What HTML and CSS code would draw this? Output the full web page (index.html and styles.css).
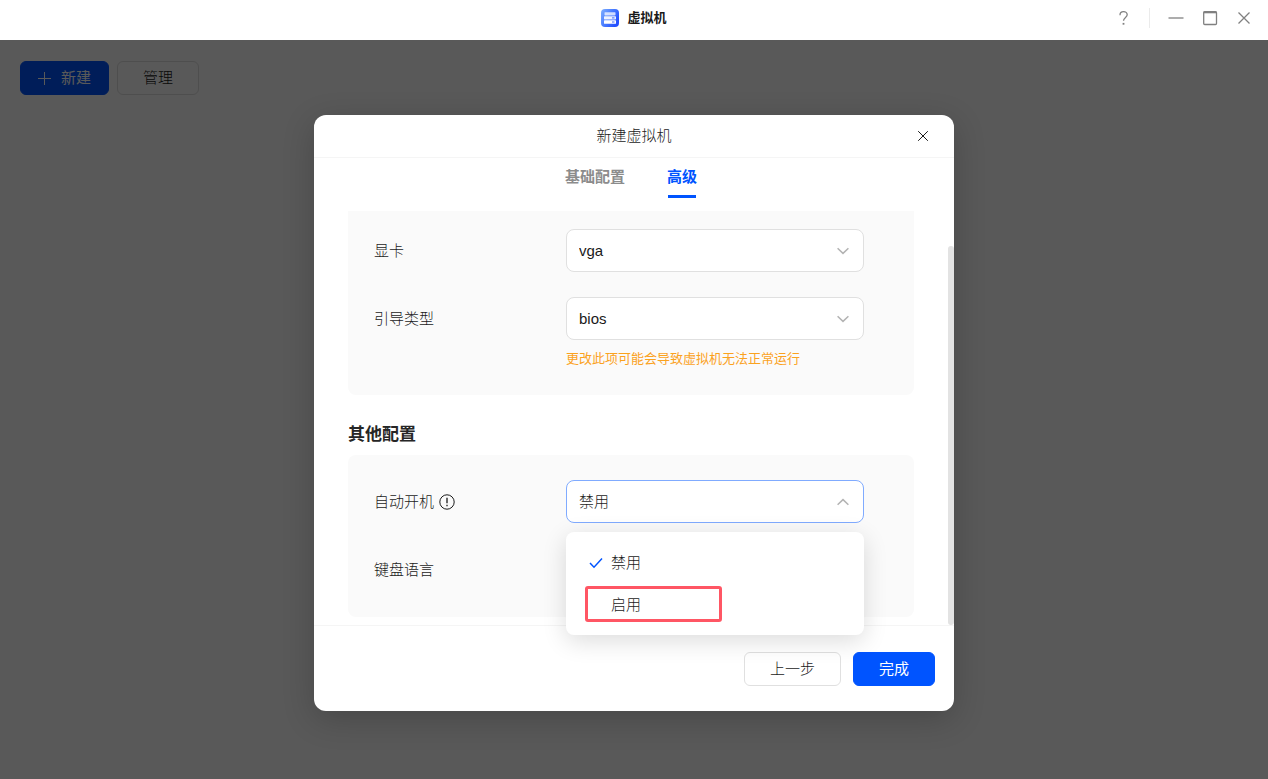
FILE: index.html
```
<!DOCTYPE html>
<html lang="zh-CN">
<head>
  <meta charset="UTF-8" />
  <meta name="viewport" content="width=device-width, initial-scale=1" />
  <title>虚拟机</title>
  <link rel="stylesheet" href="styles.css">
</head>

<body>
  <!-- ==== window title bar ==== -->
  <header class="titlebar">
    <div class="app-title">
      <svg width="18" height="18" viewBox="0 0 18 18" aria-hidden="true">
        <defs>
          <linearGradient id="logo" x1="0" y1="0" x2="1" y2="0.6">
            <stop offset="0" stop-color="#7fb0ff" />
            <stop offset="0.5" stop-color="#4a7dff" />
            <stop offset="1" stop-color="#2450ff" />
          </linearGradient>
        </defs>
        <rect width="18" height="18" rx="4" fill="url(#logo)" />
        <rect x="3.5" y="3.2" width="11" height="3.2" rx="0.6" fill="#fff" fill-opacity="0.75" />
        <rect x="3" y="7.2" width="12" height="3.2" rx="0.6" fill="#fff" fill-opacity="0.9" />
        <rect x="3" y="11.2" width="12" height="3.6" rx="0.6" fill="#fff" />
        <path d="M11 8.9h2.5M11 13h2.5" stroke="#3f6bff" stroke-width="1" />
      </svg>
      <h1>虚拟机</h1>
    </div>

    <div class="window-controls">
      <button class="icon-btn help" aria-label="帮助">
        <svg width="16" height="16" viewBox="0 0 16 16">
          <path d="M4 5.2C4 2.9 5.4 1.7 7.5 1.7s3.7 1.3 3.7 3.1c0 2.6-3.7 2.8-3.7 6" />
          <path d="M7.5 12.9v1.8" stroke-width="1.8" />
        </svg>
      </button>
      <button class="icon-btn" aria-label="最小化">
        <svg width="16" height="16" viewBox="0 0 16 16"><path d="M0.5 8h15" /></svg>
      </button>
      <button class="icon-btn" aria-label="最大化">
        <svg width="16" height="16" viewBox="0 0 16 16">
          <rect x="1.7" y="1.7" width="12.8" height="12.8" rx="1" />
          <path d="M1.5 2.4h13" stroke-width="1.8" />
        </svg>
      </button>
      <button class="icon-btn" aria-label="关闭">
        <svg width="16" height="16" viewBox="0 0 16 16"><path d="M2.5 2.5l11 11M13.5 2.5l-11 11" /></svg>
      </button>
    </div>
  </header>

  <div class="workspace">
    <div class="toolbar">
      <button class="btn btn-primary">
        <svg width="13" height="13" viewBox="0 0 13 13" aria-hidden="true"><path d="M6.5 0v13M0 6.5h13" /></svg>
        新建
      </button>
      <button class="btn">管理</button>
    </div>

    <!-- ==== create VM dialog ==== -->
    <div class="overlay">
      <section class="dialog" role="dialog" aria-modal="true" aria-labelledby="dialog-title">
        <header class="dialog-header">
          <h2 id="dialog-title">新建虚拟机</h2>
          <button class="icon-btn dialog-close" aria-label="关闭">
            <svg width="12" height="12" viewBox="0 0 12 12"><path d="M1.2 1.2l9.6 9.6M10.8 1.2l-9.6 9.6" /></svg>
          </button>
        </header>

        <div class="tabs" role="tablist">
          <button class="tab" role="tab" aria-selected="false">基础配置</button>
          <button class="tab active" role="tab" aria-selected="true">高级</button>
        </div>

        <div class="dialog-body">
          <div class="card card-scrolled">
            <div class="field">
              <label for="gpu">显卡</label>
              <div class="select">
                <select id="gpu"><option>vga</option></select>
                <svg width="12" height="8" viewBox="0 0 12 8"><path d="M0.6 1.2L6 6.4l5.4-5.2" /></svg>
              </div>
            </div>
            <div class="field">
              <label for="boot">引导类型</label>
              <div class="select">
                <select id="boot"><option>bios</option></select>
                <svg width="12" height="8" viewBox="0 0 12 8"><path d="M0.6 1.2L6 6.4l5.4-5.2" /></svg>
              </div>
              <p class="hint">更改此项可能会导致虚拟机无法正常运行</p>
            </div>
          </div>

          <h3>其他配置</h3>

          <div class="card">
            <div class="field">
              <label for="autostart">自动开机
                <svg width="16" height="16" viewBox="0 0 16 16" aria-hidden="true">
                  <circle cx="8" cy="8" r="7.2" />
                  <path d="M8 3.8v5.4M8 10.8v1.4" stroke-width="1.3" />
                </svg>
              </label>
              <div class="select open">
                <select id="autostart"><option>禁用</option><option>启用</option></select>
                <svg width="12" height="8" viewBox="0 0 12 8"><path d="M0.6 6.8L6 1.6l5.4 5.2" /></svg>
                <div class="menu" role="listbox" aria-label="自动开机">
                  <button class="option" role="option" aria-selected="true">
                    <svg width="14" height="12" viewBox="0 0 14 12" aria-hidden="true"><path d="M1 6l4 4.2L13 1.6" /></svg>
                    禁用
                  </button>
                  <button class="option" role="option" aria-selected="false">启用</button>
                  <span class="marker"></span>
                </div>
              </div>
            </div>
            <div class="field">
              <label for="keyboard">键盘语言</label>
              <div class="select">
                <select id="keyboard"></select>
              </div>
            </div>
          </div>

          <span class="scroll-thumb"></span>
        </div>

        <footer class="dialog-footer">
          <button class="btn">上一步</button>
          <button class="btn btn-primary">完成</button>
        </footer>
      </section>
    </div>
  </div>
</body>
</html>
```
FILE: styles.css
```
:root{
  --blue:#0054ff;
  --text:#1a1a1a;
  --muted:#8c8c8c;
  --line:#e0e0e0;
  --line-light:#f5f5f5;
}
*{box-sizing:border-box;}

body{
  margin:0;
  min-height:100vh;
  display:flex;
  flex-direction:column;
  background:#fff;
  color:var(--text);
  font:300 15px/22px "Liberation Sans","Noto Sans CJK SC",sans-serif;
}
h1,h2,h3,p{margin:0;}
button,select{font:inherit;color:inherit;}
button{padding:0;border:0;background:none;cursor:pointer;}
svg{flex:none;fill:none;stroke:currentColor;}
.app-title svg{stroke:none;}

/* ---- title bar ---- */
.titlebar{
  display:grid;
  grid-template-columns:1fr auto 1fr;
  align-items:center;
  height:40px;
  padding:0 16px 4px;
}
.app-title{
  grid-column:2;
  display:flex;
  align-items:center;
  gap:8px;
}
.app-title h1{font-size:13px;line-height:20px;font-weight:700;}
.window-controls{
  justify-self:end;
  display:flex;
  align-items:center;
  gap:18px;
  color:#808080;
}
.window-controls svg{stroke-width:1.3;}
.icon-btn{display:flex;}
.help{position:relative;margin-right:18px;}
.help::after{
  content:"";
  position:absolute;
  left:33px;
  top:-2px;
  height:20px;
  border-left:1px solid #ebebeb;
}

/* ---- page behind the dialog ---- */
.workspace{position:relative;flex:1;}
.toolbar{display:flex;gap:8px;padding:21px 20px;}
.btn{
  display:inline-flex;
  align-items:center;
  justify-content:center;
  gap:10px;
  height:34px;
  padding:0 25px;
  border:1px solid var(--line);
  border-radius:6px;
  background:#fff;
}
.btn-primary{
  border-color:var(--blue);
  background:var(--blue);
  color:#fff;
  font-weight:400;
}
.toolbar .btn-primary{padding:0 17px;}

.overlay{
  position:absolute;
  inset:0;
  display:flex;
  align-items:center;
  justify-content:center;
  padding-top:7px;
  background:rgba(0,0,0,.65);
}

/* ---- dialog ---- */
.dialog{
  width:640px;
  max-width:100%;
  border-radius:12px;
  background:#fff;
  box-shadow:0 8px 32px rgba(0,0,0,.2);
}
.dialog-header{
  display:grid;
  grid-template-columns:1fr auto 1fr;
  align-items:center;
  height:43px;
  padding:0 25px;
  border-bottom:1px solid var(--line-light);
}
.dialog-header h2{grid-column:2;font-size:15px;font-weight:inherit;}
.dialog-close{justify-self:end;}

.tabs{
  display:flex;
  justify-content:center;
  gap:42px;
  height:53px;
  padding:8px 40px 13px 34px;
}
.tab{
  position:relative;
  display:flex;
  color:var(--muted);
  font-weight:700;
}
.tab.active{color:var(--blue);}
.tab.active::after{
  content:"";
  position:absolute;
  left:1px;
  right:1px;
  bottom:0;
  height:3px;
  background:var(--blue);
}

.dialog-body{position:relative;padding:0 40px 8px 34px;}
.dialog-body h3{
  padding:28px 0 8px;
  color:#262626;
  font-size:17px;
  line-height:24px;
  font-weight:700;
}
.card{
  display:grid;
  gap:25px;
  padding:25px 50px 26px 26px;
  border-radius:8px;
  background:#fafafa;
}
/* top edge is cut off by the scroll position */
.card-scrolled{padding-top:18px;border-radius:0 0 8px 8px;}

.field{
  display:grid;
  grid-template-columns:192px 1fr;
  align-items:center;
}
.field label{display:flex;align-items:center;gap:5px;}
.hint{
  grid-column:2;
  padding-top:9px;
  color:#faa21e;
  font-size:13px;
  line-height:20px;
  font-weight:400;
  white-space:nowrap;
}

.select{position:relative;}
.select select{
  display:block;
  width:100%;
  height:43px;
  padding:0 36px 0 12px;
  border:1px solid var(--line);
  border-radius:8px;
  background:#fff;
  appearance:none;
}
.select > svg{
  position:absolute;
  right:15px;
  top:18px;
  color:#b3b3b3;
  stroke-width:1.5;
  pointer-events:none;
}
.select.open select{border-color:#80abff;}

.menu{
  position:absolute;
  z-index:1;
  top:calc(100% + 9px);
  left:0;
  right:0;
  padding:10px 0 9px;
  border-radius:8px;
  background:#fff;
  box-shadow:0 6px 24px rgba(0,0,0,.14);
}
.option{
  display:flex;
  align-items:center;
  gap:8px;
  width:100%;
  height:42px;
  padding-left:45px;
}
.option[aria-selected="true"]{padding-left:23px;}
.option svg{color:var(--blue);stroke-width:1.5;}
.marker{
  position:absolute;
  left:19px;
  top:54px;
  width:137px;
  height:36px;
  border:3px solid #ff5664;
  border-radius:3px;
  pointer-events:none;
}

.scroll-thumb{
  position:absolute;
  top:35px;
  right:0;
  bottom:0;
  width:6px;
  border-radius:3px;
  background:#e3e3e3;
}

.dialog-footer{
  display:flex;
  justify-content:flex-end;
  gap:12px;
  padding:26px 19px 25px;
  border-top:1px solid var(--line-light);
}
```
